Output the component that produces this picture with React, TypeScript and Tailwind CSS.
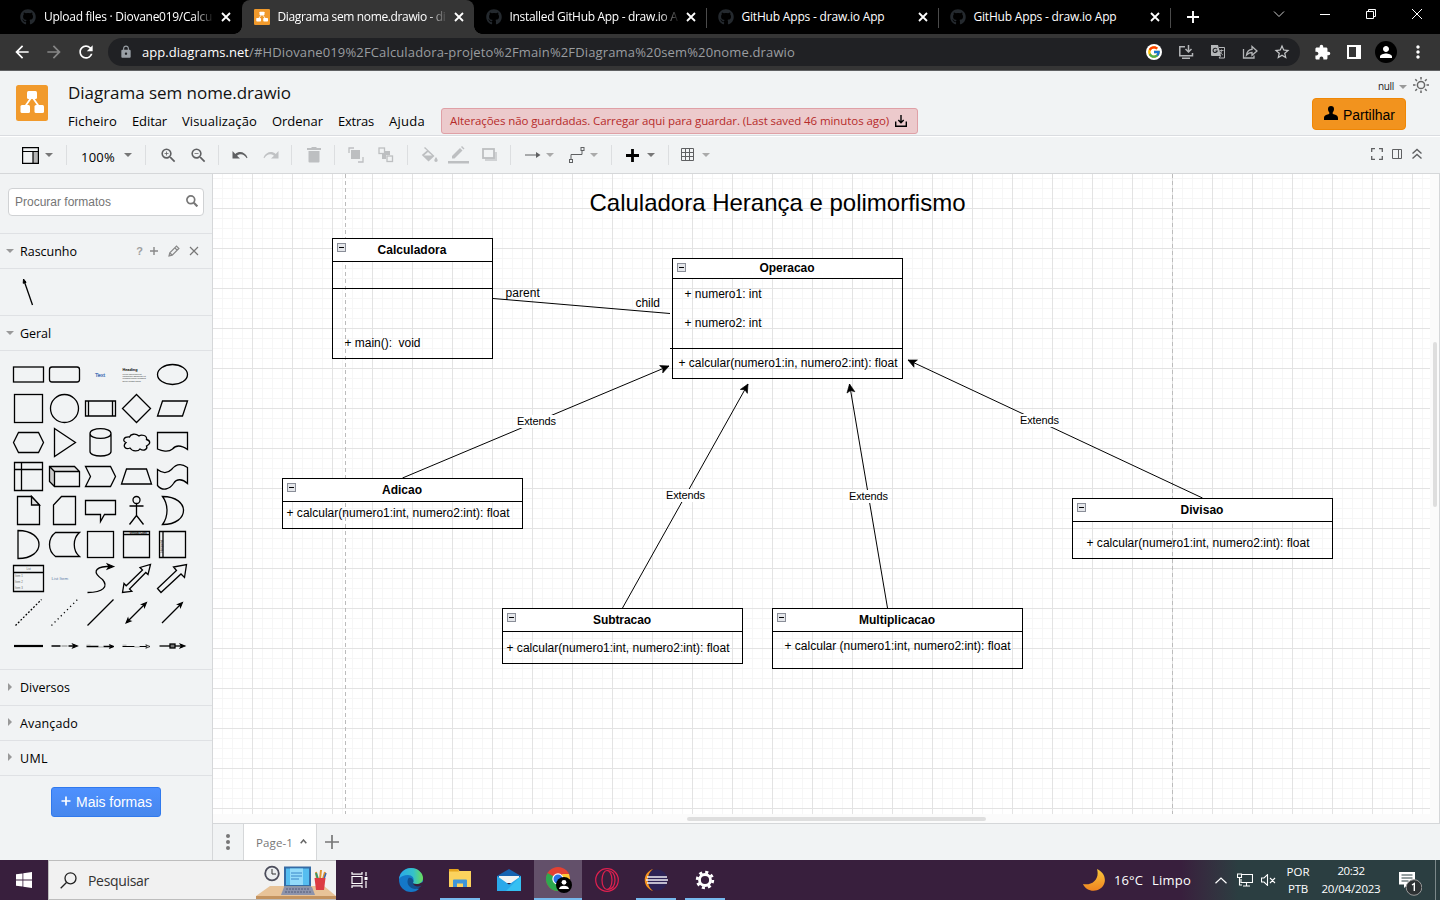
import { useLayoutEffect, useRef } from "react";
import type { ReactNode } from "react";
import { FaGithub } from "react-icons/fa";
import { FcGoogle } from "react-icons/fc";
import {
  MdLock, MdExtension, MdPerson, MdStarBorder, MdArrowBack, MdArrowForward, MdRefresh,
  MdMoreVert, MdZoomIn, MdZoomOut,
} from "react-icons/md";

/* Text run whose letter spacing is adjusted so that it takes exactly w pixels. */
function Fit({ w, className = "", children }: { w: number; className?: string; children: string }) {
  const ref = useRef<HTMLSpanElement>(null);
  useLayoutEffect(() => {
    const el = ref.current;
    if (!el) return;
    el.style.letterSpacing = "0px";
    const natural = el.getBoundingClientRect().width;
    el.style.letterSpacing = `${(w - natural) / children.length}px`;
  }, [w, children]);
  return <span ref={ref} className={`inline-block shrink-0 whitespace-pre ${className}`}>{children}</span>;
}

function Caret({ className = "" }: { className?: string }) {
  return <svg viewBox="0 0 8 4" className={`h-1 w-2 shrink-0 fill-current ${className}`}><path d="M0 0h8L4 4z" /></svg>;
}

function Logo({ className = "" }: { className?: string }) {
  return (
    <svg viewBox="0 0 32 36" preserveAspectRatio="none" className={className}>
      <rect width="32" height="36" rx="2.500" fill="#f19a2c" />
      <path d="M15 13L8 23M17 13l7 10" stroke="#fff" strokeWidth="1.800" />
      <rect x="11" y="6" width="10" height="8" rx="1.500" fill="#fff" />
      <rect x="4.500" y="20" width="9.500" height="8" rx="1.500" fill="#fff" />
      <rect x="18.500" y="20" width="9.500" height="8" rx="1.500" fill="#fff" />
    </svg>
  );
}

const tabs = [
  { t: "Upload files · Diovane019/Calcu", w: 168, active: false, line: false, fade: true },
  { t: "Diagrama sem nome.drawio - di", w: 168, active: true, line: false, fade: true },
  { t: "Installed GitHub App - draw.io A", w: 168, active: false, line: true, fade: true },
  { t: "GitHub Apps - draw.io App", w: 143, active: false, line: true, fade: false },
  { t: "GitHub Apps - draw.io App", w: 143, active: false, line: true, fade: false },
];

function TabStrip() {
  return (
    <div className="flex h-[34px] bg-black pl-2 text-white">
      {tabs.map((tab, i) => (
        <div key={i} className={`relative flex h-[34px] shrink-0 items-center ${i === 0 ? "w-[234px] pl-3 pr-[10px]" : "w-[232px] pl-[11.500px] pr-[9px]"} ${tab.active ? "rounded-t-lg bg-[#353535]" : ""}`}>
          {tab.active && <div className="absolute -left-2 bottom-0 size-2 bg-[radial-gradient(circle_at_0_0,transparent_7.500px,#353535_8px)]" />}
          {tab.active && <div className="absolute -right-2 bottom-0 size-2 bg-[radial-gradient(circle_at_100%_0,transparent_7.500px,#353535_8px)]" />}
          {tab.active ? <Logo className="size-4 shrink-0" /> : <FaGithub className="size-4 shrink-0 text-[#24292e]" />}
          <div className={`ml-2 mr-auto h-[18px] w-[170px] text-[12px] leading-[18px] ${tab.fade ? "[mask-image:linear-gradient(to_right,black_88%,transparent)]" : ""}`}>
            <Fit w={tab.w}>{tab.t}</Fit>
          </div>
          <svg viewBox="0 0 12 12" className="size-3 shrink-0"><path d="M2 2l8 8M10 2l-8 8" stroke="#fff" strokeWidth="1.800" /></svg>
          {tab.line && <div className="absolute -right-px top-2 h-5 w-px bg-[#4b4b4b]" />}
        </div>
      ))}
      <svg viewBox="0 0 14 14" className="ml-4 mt-[10px] size-3.5"><path d="M7 1v12M1 7h12" stroke="#fff" strokeWidth="1.900" /></svg>
      <div className="ml-auto flex h-7">
        <div className="flex w-[46px] items-center justify-center"><svg viewBox="0 0 12 12" className="size-3" fill="none" stroke="#ccc"><path d="M1 3.500l5 5 5-5" /></svg></div>
        <div className="flex w-[46px] items-center justify-center"><svg viewBox="0 0 10 10" className="size-2.5"><path d="M0 5.500h10" stroke="#fff" /></svg></div>
        <div className="flex w-[46px] items-center justify-center"><svg viewBox="0 0 10 10" className="size-2.5" fill="none" stroke="#fff"><path d="M.5 2.500h7v7h-7zM2.500 2.500v-2h7v7h-2" /></svg></div>
        <div className="flex w-[46px] items-center justify-center"><svg viewBox="0 0 10 10" className="size-2.5" stroke="#fff"><path d="M0 0l10 10M10 0L0 10" /></svg></div>
      </div>
    </div>
  );
}

function Slot({ children }: { children: ReactNode }) {
  return <div className="flex h-8 w-8 shrink-0 items-center justify-center">{children}</div>;
}

function AddressBar() {
  return (
    <div className="flex h-[37px] items-center border-b border-[#5f6062] bg-[#353535] pl-[6px] pr-[6px] text-white">
      <Slot><MdArrowBack className="size-5" /></Slot>
      <Slot><MdArrowForward className="size-5 text-[#868686]" /></Slot>
      <Slot><MdRefresh className="size-5" /></Slot>
      <div className="ml-[6px] mr-[6px] flex h-7 flex-1 items-center rounded-full bg-[#202124] pl-[11px] pr-[2px] text-[13px]">
        <MdLock className="size-3.5 text-[#9aa0a6]" />
        <div className="ml-[9px] flex-1 leading-5">
          <Fit w={107}>app.diagrams.net</Fit>
          <Fit w={546} className="text-[#9a9da0]">/#HDiovane019%2FCalculadora-projeto%2Fmain%2FDiagrama%20sem%20nome.drawio</Fit>
        </div>
        <Slot><span className="flex size-4 items-center justify-center rounded-full bg-white"><FcGoogle className="size-3.5" /></span></Slot>
        <Slot>
          <svg viewBox="0 0 16 16" className="size-4" fill="none" stroke="#b4b6b8" strokeWidth="1.500">
            <path d="M7 2.800H1.800v9h12.700V9M4 14.200h8" /><path d="M10.500 1v6.500M7.500 5l3 3 3-3" />
          </svg>
        </Slot>
        <Slot>
          <svg viewBox="0 0 16 16" className="size-4">
            <path d="M1 1h7l3 11H2a1 1 0 0 1-1-1z" fill="#b4b6b8" /><path d="M9 3.500h5.500v10.500H9l1.500-2" fill="none" stroke="#b4b6b8" />
            <path d="M7 5.300A2.100 2.100 0 1 0 7.200 7H5.500" fill="none" stroke="#202124" strokeWidth="1.100" /><path d="M9.500 6.500h4M11.500 5.500v1c0 2-1 3-2 4M10 7.500c1 2 2 3 3 3.500" fill="none" stroke="#b4b6b8" strokeWidth=".9" />
          </svg>
        </Slot>
        <Slot>
          <svg viewBox="0 0 16 16" className="size-4" fill="none" stroke="#b4b6b8" strokeWidth="1.300">
            <path d="M1.500 5v9h10.500v-2.500" /><path d="M4.500 11c.5-4 2.500-5.500 5.500-5.700V2.500L15 7l-5 4.300V8.500c-2.500 0-4 .8-5.500 2.500z" />
          </svg>
        </Slot>
        <Slot><MdStarBorder className="size-[18px] text-[#c6c8ca]" /></Slot>
      </div>
      <Slot><MdExtension className="size-[17px]" /></Slot>
      <Slot><svg viewBox="0 0 14 14" className="size-3.5"><path fillRule="evenodd" d="M0 0h14v14H0zM2 2v10h7V2z" fill="#fff" /></svg></Slot>
      <Slot><span className="flex size-[22px] items-center justify-center rounded-full bg-black"><MdPerson className="size-[18px]" /></span></Slot>
      <Slot><MdMoreVert className="size-5" /></Slot>
    </div>
  );
}

const menus = [
  { t: "Ficheiro", w: 49 }, { t: "Editar", w: 35 }, { t: "Visualização", w: 75 },
  { t: "Ordenar", w: 51 }, { t: "Extras", w: 36 }, { t: "Ajuda", w: 36 },
];

function Header() {
  return (
    <div className="flex h-[65px] border-b border-[#dadce0] bg-[#f1f3f4]">
      <Logo className="ml-4 mt-[14px] h-9 w-8 shrink-0" />
      <div className="ml-5 flex flex-col">
        <div className="mt-[10px] h-6 text-[17px] leading-6 text-[#111]"><Fit w={223}>Diagrama sem nome.drawio</Fit></div>
        <div className="mt-[3px] flex h-[26px] items-center text-[13px] leading-5 text-black">
          <div className="flex gap-[15px]">{menus.map((m) => <Fit key={m.t} w={m.w}>{m.t}</Fit>)}</div>
          <div className="ml-[16px] flex h-[26px] w-[477px] shrink-0 items-center rounded-[3px] border border-[#dfa0a6] bg-[#eccacc] pl-2 text-[11.500px] text-[#b62a2a]">
            <Fit w={439}>Alterações não guardadas. Carregar aqui para guardar. (Last saved 46 minutos ago)</Fit>
            <svg viewBox="0 0 12 12" className="ml-[6px] size-3" fill="none" stroke="#000" strokeWidth="1.400"><path d="M.7 6.500v4.800h10.600V6.500" /><path d="M6 0v7M3.300 5L6 7.700 8.700 5" /></svg>
          </div>
        </div>
      </div>
      <div className="ml-auto flex w-[128px] flex-col">
        <div className="ml-[66px] mt-[5px] flex h-[21px] items-center text-[10px] text-[#222]">
          <Fit w={16}>null</Fit>
          <Caret className="ml-[5px] mt-px text-[#999]" />
          <svg viewBox="0 0 18 18" className="-mt-[3px] ml-[5px] size-[18px]" fill="none" stroke="#666" strokeWidth="1.500">
            <circle cx="9" cy="9" r="3.600" /><path d="M9 1v2.500M9 14.500V17M1 9h2.500M14.500 9H17M3.300 3.300L5 5M13 13l1.700 1.700M3.300 14.700L5 13M13 5l1.700-1.700" />
          </svg>
        </div>
        <div className="mt-px flex h-8 w-[94px] items-center rounded border border-[#f08705] bg-[#f2931e] pl-[11px] pt-0.5 font-['Liberation_Sans',sans-serif] text-[14px] text-black">
          <svg viewBox="0 0 14 14" className="-mt-1 size-3.5"><path d="M7 0c2 0 3 1.300 3 3 0 1.500-.6 2.600-1.300 3.500v1.300C11 9 14 9 14 12v2H0v-2c0-3 3-3 5.300-4.200V6.500C4.600 5.600 4 4.500 4 3c0-1.700 1-3 3-3z" /></svg>
          <Fit w={52} className="ml-[5px]">Partilhar</Fit>
        </div>
      </div>
    </div>
  );
}

function Sep({ className }: { className: string }) {
  return <div className={`h-5 w-px shrink-0 bg-[#dcdee0] ${className}`} />;
}

function Toolbar() {
  return (
    <div className="flex h-[38px] items-center border-b border-[#d5d7d9] border-t border-t-white bg-[#f1f3f4] pl-[22px] text-[#5f6062]">
      <svg viewBox="0 0 17 17" className="size-[17px] shrink-0"><path d="M11 5h5v11h-5z" fill="#b5b5b5" /><path d="M.6.600h15.800v15.800H.6zM.6 4.500h15.800M11 4.500v12" fill="none" stroke="#000" strokeWidth="1.200" /></svg>
      <Caret className="ml-1.5 text-[#777]" />
      <Sep className="ml-[13px]" />
      <div className="ml-[14px] mt-[3px] text-[13px] leading-5 text-black"><Fit w={34}>100%</Fit></div>
      <Caret className="ml-[9px] text-[#777]" />
      <Sep className="ml-[13px]" />
      <MdZoomIn className="ml-[13px] size-[19px] shrink-0" />
      <MdZoomOut className="ml-[11px] size-[19px] shrink-0" />
      <Sep className="ml-[10px]" />
      <svg viewBox="0 0 16 10" className="ml-[13px] h-[10px] w-4 shrink-0"><path d="M.5 1v7.500H8L5 5.700C8.500 3 12 4 14.700 8.300l.8-.8C13 2 7.500.500 3.300 4z" fill="#5f6062" /></svg>
      <svg viewBox="0 0 16 10" className="ml-[15px] h-[10px] w-4 shrink-0 -scale-x-100"><path d="M.5 1v7.500H8L5 5.700C8.500 3 12 4 14.700 8.300l.8-.8C13 2 7.500.500 3.300 4z" fill="#c0c2c4" /></svg>
      <Sep className="ml-[12px]" />
      <svg viewBox="0 0 14 16" className="ml-[15px] h-4 w-3.5 shrink-0" fill="#bdbfc1"><path d="M0 1h4l1-1h4l1 1h4v2H0zM1.500 4h11v10.500a1 1 0 0 1-1 1h-9a1 1 0 0 1-1-1z" /></svg>
      <Sep className="ml-[13px]" />
      <svg viewBox="0 0 16 16" className="ml-[13px] size-4 shrink-0" stroke="#bdbfc1" fill="none" strokeWidth="1.300"><rect x="3" y="3" width="9" height="9" fill="#bdbfc1" stroke="none" /><path d="M1 6V1h5M10 15h5v-5" /></svg>
      <svg viewBox="0 0 16 16" className="ml-[14px] size-4 shrink-0" stroke="#bdbfc1" fill="none" strokeWidth="1.300"><path d="M4 4h8v4h-4v4H4z" fill="#bdbfc1" stroke="none" /><rect x="1" y="1" width="5.500" height="5.500" fill="#f1f3f4" /><rect x="9" y="9" width="5.500" height="5.500" fill="#f1f3f4" /></svg>
      <Sep className="ml-[13px]" />
      <svg viewBox="0 0 17 17" className="ml-[13px] size-[17px] shrink-0" fill="#bdbfc1"><path d="M4 0l9.500 9-6 5.500L.8 8 6 3.500 3 1z" /><path d="M7 5L3 8.500h8z" fill="#f1f3f4" /><path d="M15 10c1 1.600 1.700 2.500 1.700 3.300a1.600 1.600 0 0 1-3.400 0c0-.8.700-1.700 1.700-3.300z" /></svg>
      <svg viewBox="0 0 22 18" className="ml-[10px] h-[18px] w-[22px] shrink-0" fill="#bdbfc1"><path d="M0 15h21v2.500H0zM4 12.500V10l8-8 2.500 2.500-8 8zM13 1l1-1 2.500 2.500-1 1z" /></svg>
      <svg viewBox="0 0 16 14" className="ml-3 h-3.5 w-4 shrink-0"><path d="M3 4h12v9H3z" fill="#d0d2d4" /><rect x="1" y="1" width="11" height="9" fill="#f1f3f4" stroke="#bdbfc1" strokeWidth="1.800" /></svg>
      <Sep className="ml-[12px]" />
      <svg viewBox="0 0 16 6" className="ml-[14px] h-1.5 w-4 shrink-0"><path d="M0 3h12" stroke="#5f6062" /><path d="M11 0l4.500 3L11 6z" fill="#5f6062" /></svg>
      <Caret className="ml-[5px] text-[#aaa]" />
      <svg viewBox="0 0 16 16" className="ml-[15px] size-4 shrink-0" fill="none" stroke="#5f6062"><path d="M2 13V7.500h11V3" /><rect x=".5" y="12.500" width="3" height="3" /><rect x="12" y=".5" width="3" height="3" /></svg>
      <Caret className="ml-[5px] text-[#aaa]" />
      <Sep className="ml-[13px]" />
      <svg viewBox="0 0 13 13" className="ml-[14px] size-[13px] shrink-0"><path d="M6.500 0v13M0 6.500h13" stroke="#000" strokeWidth="2.800" /></svg>
      <Caret className="ml-2 text-[#777]" />
      <Sep className="ml-[13px]" />
      <svg viewBox="0 0 14 14" className="ml-[12px] size-3.5 shrink-0" fill="none" stroke="#5f6062"><path d="M.5.5h12v12H.5zM4.500.5v12M8.500.5v12M.5 4.500h12M.5 8.500h12" /></svg>
      <Caret className="ml-[7px] text-[#aaa]" />
      <div className="ml-auto mr-[17px] flex items-center gap-[9px]">
        <svg viewBox="0 0 12 12" className="-mt-0.5 size-3" fill="none" stroke="#5f6062" strokeWidth="1.300"><path d="M.7 4V.7H4M8 .7h3.300V4M11.300 8v3.300H8M4 11.300H.7V8" /></svg>
        <svg viewBox="0 0 10 10" className="-mt-0.5 h-2.5 w-2.5" fill="none" stroke="#5f6062"><path d="M.5.5h9v9h-9zM6.500.5v9" /></svg>
        <svg viewBox="0 0 12 12" className="-mt-0.5 size-3" fill="none" stroke="#5f6062" strokeWidth="1.400"><path d="M1.500 5.500L6 1.500l4.500 4M1.500 10.500L6 6.500l4.500 4" /></svg>
      </div>
    </div>
  );
}

const arrowHead = "M0 0l-6-2.500 1.500 2.500L-6 2.500z";

const shapes: ReactNode[] = [
  <rect x="-15" y="-7.500" width="30" height="15" />,
  <rect x="-15" y="-7.500" width="30" height="15" rx="2.500" />,
  <text x="-5.500" y="2" fontSize="5.500" fill="#3060b0" stroke="#3060b0" strokeWidth=".15">Text</text>,
  <g stroke="none"><text x="-14" y="-4" fontSize="3.800" fontWeight="700" fill="#000">Heading</text><g fill="#333" fontSize="2"><text x="-14" y="0.500">Lorem ipsum dolor sit</text><text x="-14" y="2.700">consectetur adipisicing elit</text><text x="-14" y="4.900">eiusmod tempor incididunt</text><text x="-14" y="7">dolore magna aliqua.</text></g></g>,
  <ellipse rx="15" ry="10" />,
  <rect x="-14" y="-14" width="28" height="28" />,
  <circle r="14" />,
  <path d="M-15-7.500h30v15h-30zM-12-7.500v15M12-7.500v15" />,
  <path d="M0-14L14 0 0 14-14 0z" />,
  <path d="M-10-7.500h25l-5 15h-25z" />,
  <path d="M-15 0l5-10h20l5 10-5 10h-20z" />,
  <path d="M-10-14L11 0-10 14z" />,
  <path d="M-10.500-9v18c0 6 21 6 21 0V-9c0-6.500-21-6.500-21 0s21 6.500 21 0" />,
  <path d="M-7-5.500c-6-.5-7.500 4-3.500 5.500-4 4 0 7.500 4 5.500C-4 9.500 2 9 3.500 6.500c4 2.500 8 0 6.500-3 4.500-2 4-5.500 0-6.500C11-7 5-8.500 2.500-6.500-1-9.500-6-8.500-7-5.500z" />,
  <path d="M-15-10h30V7C7 1.500 3 3 0 6.500-4 10-11 8.500-15 6.500z" />,
  <path d="M-14-14h28v28h-28zM-14-7h28M-7-14v28" />,
  <g><path d="M-15-10h25l5 5H-10z" fill="#e2e2e2" stroke="none" /><path d="M-15-10l5 5v15l-5-5z" fill="#ccc" stroke="none" /><path d="M-15-10h25l5 5v15h-25l-5-5zM-10-5h25M-10-5v15M-15-10l5 5" /></g>,
  <path d="M-15-10h25l5 10-5 10h-25l5-10z" />,
  <path d="M-10-7.500h20l5 15h-30z" />,
  <path d="M-15-7C-10-3-5-3-1-7c4-5 9-7 16-2V7C10 2 4 2 1 7c-4 6-11 8-16 2z" />,
  <g><path d="M-11-14H3l8 8.500V14h-22z" /><path d="M3-14v8.500h8z" fill="#ddd" /></g>,
  <path d="M-3-14h14v28h-22V-5.500z" />,
  <path d="M-15-10h30V4H4l-4 7v-7h-15z" />,
  <g><circle cy="-10.500" r="3.500" /><path d="M0-7V5M-7-4.500H7M0 5l-7 9M0 5l7 9" /></g>,
  <path d="M-10-14c28 0 28 28 0 28 6-8 6-20 0-28z" />,
  <path d="M-10.500-14c28 0 28 28 0 28z" />,
  <path d="M-9-12h24c-7 6-7 18 0 24H-9c-8-6-8-18 0-24z" />,
  <rect x="-13" y="-13" width="26" height="26" />,
  <g><path d="M-13-13h26v26h-26zM-13-10h26" /><text x="-7" y="-10.500" fontSize="2.800" fontWeight="700" fill="#000" stroke="none">Vertical Cont</text></g>,
  <g><path d="M-13-13h26v26h-26zM-9.500-13v26" /><text transform="translate(-10 8) rotate(-90)" fontSize="2.800" fill="#000" stroke="none">Horizontal</text></g>,
  <g><path d="M-15-13h30v26h-30zM-15-6h30" /><g fill="#666" stroke="none" fontSize="2.800"><text x="-2" y="-9">List</text><text x="-13.500" y="-2">Item 1</text><text x="-13.500" y="4">Item 2</text><text x="-13.500" y="10">Item 3</text></g></g>,
  <text x="-13" y="1" fontSize="4.400" fill="#5f7fa8" stroke="none">List Item</text>,
  <g><path d="M-13 14C3 14 8 8 2 1-8-6-6-11 6-12h3" /><path d={arrowHead} transform="translate(13 -12)" fill="#000" /></g>,
  <path d="M-14 14l1.500-9 2.200 2.300L6-8.500 3.500-11 14-14l-2.500 10L9.300-6-7 10.500l2.300 2.300z" />,
  <path d="M-15 10L4-8 1-11.500 14-14l-2 13-3.500-3.500L-11.500 14z" />,
  <path d="M-13 13L13-13" strokeDasharray="1.800 1.800" />,
  <path d="M-13 13L13-13" strokeDasharray="1.200 3.200" />,
  <path d="M-13 13L13-13" />,
  <g><path d="M-8 8L8-8" /><path d={arrowHead} transform="translate(10 -10) rotate(-45) scale(.8)" fill="#000" /><path d={arrowHead} transform="translate(-10.500 10.500) rotate(135) scale(.8)" fill="#000" /></g>,
  <g><path d="M-10.500 10.500L8-8" /><path d={arrowHead} transform="translate(10 -10) rotate(-45) scale(.8)" fill="#000" /></g>,
  <path d="M-14.500 -.5h29" strokeWidth="2.200" />,
  <g><path d="M-13 -.5h9M4 -.5h5" /><path d="M-3 -.5h6" stroke="#999" /><path d={arrowHead} transform="translate(13 -.5) scale(.8)" fill="#000" /></g>,
  <g><path d="M-14 0h12M3 0h7" /><path d="M-2 .5h5M-14-1.300h4" stroke="#999" strokeWidth=".8" /><path d={arrowHead} transform="translate(13.500 0) scale(.75)" fill="#000" /></g>,
  <g strokeWidth="1"><path d="M-14 0h12M3 0h7" /><path d="M-2 .5h5M-14-1.300h4" stroke="#999" strokeWidth=".8" /><path d={arrowHead} transform="translate(13.500 0) scale(.7)" /></g>,
  <g><path d="M-13-.5h23" /><rect x="-2.500" y="-2.500" width="5" height="4" fill="#777" /><path d={arrowHead} transform="translate(12.500 -.5) scale(.8)" fill="#000" /></g>,
];

function Closed({ t, w, className }: { t: string; w: number; className: string }) {
  return (
    <div className={`flex items-center border-b border-[#dfe1e4] pl-2 text-[12.500px] ${className}`}>
      <svg viewBox="0 0 4 8" className="-mt-0.5 h-2 w-1 shrink-0"><path d="M0 0l4 4-4 4z" fill="#999" /></svg>
      <Fit w={w} className="ml-2 mt-0.5 font-medium">{t}</Fit>
    </div>
  );
}

function Sidebar() {
  return (
    <div className="flex w-[213px] shrink-0 flex-col border-r border-[#d5d7d9] bg-[#f1f3f4] text-black">
      <div className="h-[60px] border-b border-[#dfe1e4] px-2 pt-[14px]">
        <div className="flex h-7 w-[196px] items-center justify-between rounded border border-[#d0d2d4] bg-white pl-1.5 pr-[5px] font-['Liberation_Sans',sans-serif] text-[12px] text-[#757575]">
          <Fit w={96}>Procurar formatos</Fit>
          <svg viewBox="0 0 12 12" className="-mt-0.5 size-3" fill="none" stroke="#777"><circle cx="4.800" cy="4.800" r="3.900" strokeWidth="1.700" /><path d="M7.800 7.800l3.600 3.600" strokeWidth="2.200" /></svg>
        </div>
      </div>
      <div className="flex h-[35px] items-center border-b border-[#dfe1e4] pl-1.5 text-[12.500px]">
        <Caret className="text-[#999]" />
        <Fit w={57} className="ml-1.5 mt-0.5 font-medium">Rascunho</Fit>
        <div className="ml-auto mr-[9px] flex items-center">
          <span className="font-['Liberation_Sans',sans-serif] text-[11px] font-bold text-[#a0a0a0]">?</span>
          <svg viewBox="0 0 10 10" className="ml-1.5 size-2.5"><path d="M5 1v8M1 5h8" stroke="#888" strokeWidth="1.400" /></svg>
          <svg viewBox="0 0 12 12" className="ml-[9px] size-3" fill="none" stroke="#888" strokeWidth="1.200"><path d="M1 11l.8-3.200L8.500 1.100l2.400 2.400L4.200 10.200zM7 3l2.300 2.300M2 8l2 2" /></svg>
          <svg viewBox="0 0 10 10" className="ml-[9px] mr-1 size-2.5"><path d="M1 1l8 8M9 1L1 9" stroke="#777" strokeWidth="1.200" /></svg>
        </div>
      </div>
      <div className="h-[47px] border-b border-[#dfe1e4] pl-[18px] pt-2">
        <svg viewBox="0 0 20 30" className="h-[30px] w-5"><path d="M14.500 28L6.500 5" stroke="#000" strokeWidth="1.300" /><path d="M5.500 2l-.3 4.300 2.900-1z" stroke="#000" /></svg>
      </div>
      <div className="flex h-[35px] items-center border-b border-[#dfe1e4] pl-1.5 text-[12.500px]">
        <Caret className="text-[#999]" />
        <Fit w={31} className="ml-1.5 mt-0.5 font-medium">Geral</Fit>
      </div>
      <div className="grid h-[319px] grid-cols-[repeat(5,36px)] content-start border-b border-[#dfe1e4] pl-[10px] pt-1.5 font-['Liberation_Sans',sans-serif]">
        {shapes.map((s, i) => (
          <svg key={i} viewBox="-18.500 -17.500 36 34" className="h-[34px] w-9" fill="none" stroke="#000" strokeWidth="1.300">{s}</svg>
        ))}
      </div>
      <Closed t="Diversos" w={50} className="h-9" />
      <Closed t="Avançado" w={58} className="h-[35px]" />
      <Closed t="UML" w={28} className="h-[35px]" />
      <div className="ml-[51px] mt-[11px] flex h-[30px] w-[110px] items-center rounded-[3px] border border-[#3079ed] bg-linear-to-b from-[#4d90fe] to-[#4787ed] pl-[9px] font-['Liberation_Sans',sans-serif] text-[14px] text-white">
        <svg viewBox="0 0 10 10" className="-mt-0.5 size-2.5"><path d="M5 .5v9M.5 5h9" stroke="#fff" strokeWidth="1.700" /></svg>
        <Fit w={76} className="ml-[5px]">Mais formas</Fit>
      </div>
    </div>
  );
}

type ClassNode = { name: string; x: number; y: number; w: number; h: number; head: number; tw: number };
const nodes: ClassNode[] = [
  { name: "Calculadora", x: 332, y: 238, w: 161, h: 121, head: 24, tw: 69 },
  { name: "Operacao", x: 672, y: 258, w: 231, h: 121, head: 21, tw: 55 },
  { name: "Adicao", x: 282, y: 478, w: 241, h: 51, head: 24, tw: 40 },
  { name: "Subtracao", x: 502, y: 608, w: 241, h: 56, head: 24, tw: 58 },
  { name: "Multiplicacao", x: 772, y: 608, w: 251, h: 61, head: 24, tw: 76 },
  { name: "Divisao", x: 1072, y: 498, w: 261, h: 61, head: 24, tw: 43 },
];

/* x = left edge, y = vertical centre */
const labels = [
  { t: "+ main():  void", x: 344.5, y: 343, w: 76 },
  { t: "parent", x: 505.5, y: 293, w: 34.5 },
  { t: "child", x: 635.5, y: 303, w: 24.5 },
  { t: "+ numero1: int", x: 684.5, y: 294, w: 77 },
  { t: "+ numero2: int", x: 684.5, y: 323, w: 77 },
  { t: "+ calcular(numero1:in, numero2:int): float", x: 678.5, y: 363, w: 219 },
  { t: "+ calcular(numero1:int, numero2:int): float", x: 286.5, y: 513, w: 223 },
  { t: "+ calcular(numero1:int, numero2:int): float", x: 506.5, y: 648, w: 223 },
  { t: "+ calcular (numero1:int, numero2:int): float", x: 784.5, y: 646, w: 226 },
  { t: "+ calcular(numero1:int, numero2:int): float", x: 1086.5, y: 543, w: 223 },
];

const edges = [
  { x1: 402.5, y1: 478, x2: 669, y2: 366, lx: 536.5, ly: 422 },
  { x1: 622.5, y1: 608, x2: 748, y2: 384, lx: 685.5, ly: 496 },
  { x1: 887.5, y1: 608, x2: 849.5, y2: 384, lx: 868.5, ly: 497 },
  { x1: 1202.5, y1: 498, x2: 908, y2: 360, lx: 1039.5, ly: 421 },
];

const OX = 213;
const OY = 174;

function Canvas() {
  return (
    <div className="relative h-[649px] overflow-hidden border-r border-[#d5d7d9] bg-[#fbfbfb] font-['Liberation_Sans',sans-serif] text-[12px] leading-[14px] text-black">
      <svg viewBox="213 174 1226 649" className="absolute left-0 top-0 h-[649px] w-[1226px]">
        <defs>
          <pattern id="grid" x="252" y="208" width="40" height="40" patternUnits="userSpaceOnUse">
            <path d="M10.500 0v40M20.500 0v40M30.500 0v40M0 10.500h40M0 20.500h40M0 30.500h40" stroke="#f6f6f6" />
            <path d="M.5 0v40M0 .5h40" stroke="#e3e3e3" />
          </pattern>
        </defs>
        <rect x="213" y="174" width="1217" height="640" fill="#fff" />
        <rect x="213" y="174" width="1217" height="640" fill="url(#grid)" />
        <path d="M345.500 174v640M1172.500 174v640" stroke="#bcbcbc" strokeDasharray="4 3" />
        <path d="M493 298.500L670 313.500M670 348.500h3" stroke="#000" fill="none" />
        {edges.map((e) => (
          <g key={e.lx}>
            <path d={`M${e.x1} ${e.y1}L${e.x2} ${e.y2}`} stroke="#000" />
            <path d="M0 0l-8.500-4 2 4-2 4z" stroke="#000" strokeWidth=".6" transform={`translate(${e.x2} ${e.y2}) rotate(${(Math.atan2(e.y2 - e.y1, e.x2 - e.x1) * 180) / Math.PI})`} />
          </g>
        ))}
      </svg>
      <div className="absolute left-[376.500px] top-[14px] text-[24px] leading-[29px]"><Fit w={376}>Caluladora Herança e polimorfismo</Fit></div>
      {nodes.map((n) => (
        <div key={n.name} className="absolute flex flex-col border border-black" style={{ left: n.x - OX, top: n.y - OY, width: n.w, height: n.h }}>
          <div className={`relative flex shrink-0 items-center justify-center border-b border-black bg-white pr-px font-bold ${n.name === "Operacao" ? "pb-0.5" : ""}`} style={{ height: n.head - 1 }}>
            <Fit w={n.tw}>{n.name}</Fit>
            <svg viewBox="0 0 9 9" className="absolute left-1 top-1 size-[9px]"><rect x=".5" y=".5" width="8" height="8" fill="#e4e6ea" stroke="#8a8e98" /><path d="M2 4.500h5" stroke="#000" /></svg>
          </div>
          {n.name === "Calculadora" && <div className="h-[27px] border-b border-black" />}
          {n.name === "Operacao" && <div className="h-[70px] border-b border-black" />}
        </div>
      ))}
      {labels.map((l, i) => (
        <div key={i} className="absolute" style={{ left: l.x - OX, top: l.y - OY - 7 }}><Fit w={l.w}>{l.t}</Fit></div>
      ))}
      {edges.map((e) => (
        <div key={e.lx} className="absolute flex w-10 justify-center bg-white text-[11px] leading-[13px]" style={{ left: e.lx - OX - 20, top: e.ly - OY - 7 }}><Fit w={39}>Extends</Fit></div>
      ))}
      <div className="absolute left-[474px] top-[643px] h-1 w-[299px] rounded-full bg-[#dedede]" />
      <div className="absolute left-[1220px] top-[168px] h-[165px] w-1 rounded-full bg-[#dedede]" />
    </div>
  );
}

function PageTabs() {
  return (
    <div className="flex h-[37px] items-center border-t border-[#d5d7d9] bg-[#f1f3f4] text-[#777]">
      <svg viewBox="0 0 4 16" className="ml-[13px] h-4 w-1 fill-current"><circle cx="2" cy="2" r="2" /><circle cx="2" cy="8" r="2" /><circle cx="2" cy="14" r="2" /></svg>
      <div className="ml-[13px] flex h-9 w-[74px] items-center border-x border-[#d5d7d9] bg-white pl-3 text-[11.500px]">
        <Fit w={37} className="mt-0.5">Page-1</Fit>
        <svg viewBox="0 0 7 5" className="-mt-px ml-[7px] h-[5px] w-[7px]" fill="none" stroke="#666" strokeWidth="1.500"><path d="M.7 4.300L3.500 1l2.800 3.300" /></svg>
      </div>
      <svg viewBox="0 0 14 14" className="ml-2 size-3.5"><path d="M7 0v14M0 7h14" stroke="#777" strokeWidth="1.700" /></svg>
    </div>
  );
}

function TaskApp({ children, className = "", bar = "" }: { children: ReactNode; className?: string; bar?: string }) {
  return (
    <div className={`flex h-10 w-[49px] shrink-0 flex-col items-center ${className}`}>
      <div className="flex h-[38px] w-12 items-center justify-center pt-0.5">{children}</div>
      <div className={`h-0.5 ${bar}`} />
    </div>
  );
}

function Taskbar() {
  return (
    <div className="flex h-10 bg-linear-to-r from-[#381f3d] from-82% to-[#2b3e41] to-86% text-white">
      <div className="flex w-12 items-center justify-center"><svg viewBox="0 0 16 16" className="size-4" fill="#fff"><path d="M0 2.300l6.500-.9v6.200H0zM7.300 1.300L16 0v7.600H7.300zM0 8.400h6.500v6.200L0 13.700zM7.300 8.400H16V16l-8.700-1.300z" /></svg></div>
      <div className="flex h-10 w-72 items-center border border-r-0 border-[#bdbdbd] bg-[#f1f1f1] pl-[11px] text-[14px] text-[#333]">
        <svg viewBox="0 0 17 17" className="size-[17px]" fill="none" stroke="#222" strokeWidth="1.300"><circle cx="10.500" cy="6.300" r="5.500" /><path d="M6.500 10.500L.7 16.300" /></svg>
        <Fit w={61} className="ml-[11px]">Pesquisar</Fit>
        <svg viewBox="256 861 80 38" className="ml-auto h-[38px] w-20">
          <path d="M270 886h54l12 10H256z" fill="#e8c398" /><path d="M256 896h80v3h-80z" fill="#c4935f" />
          <circle cx="272" cy="873.500" r="6.800" fill="#eceef0" stroke="#4c4d5b" strokeWidth="1.800" /><path d="M272 869v5h4" fill="none" stroke="#333" />
          <path d="M284 866.500h27v20h-27z" fill="#356ba5" /><path d="M286 868.500h23v16.500h-23z" fill="#55bdf0" /><path d="M290 868.500h13v16.500h-13z" fill="#93dbfa" /><path d="M291 873h11M291 876h11M291 879h8" stroke="#3b86c8" />
          <path d="M284 887h28l3 8h-34z" fill="#8d93ab" /><path d="M286 889h24M285 892h26" stroke="#555c78" strokeDasharray="2 1" />
          <path d="M317 879l-1-7M320 879l1-9M323 879l2-7" stroke="#e0932f" strokeWidth="2" /><path d="M318 879l-2-6" stroke="#399568" strokeWidth="2" /><path d="M324 879l2-6" stroke="#3867b0" strokeWidth="1.500" />
          <path d="M314.500 878h11l-1.500 12h-8z" fill="#dc3b42" />
        </svg>
      </div>
      <div className="flex w-[50px] items-center justify-center pr-[3px]">
        <svg viewBox="0 0 17 16" className="h-4 w-[17px]" fill="none" stroke="#fff" strokeWidth="1.200"><path d="M1 4.500h10v7H1zM1 0v2.200h10V0M1 16v-2.200h10V16M15 0v4M15 9v7" /><path d="M13.500 5h3v3h-3z" fill="#fff" stroke="none" /></svg>
      </div>
      <TaskApp className="pl-px">
        <svg viewBox="0 0 24 24" className="size-6">
          <defs><linearGradient id="eg" x1="0" x2="1"><stop offset="0" stopColor="#29a8ea" /><stop offset=".6" stopColor="#35c1c9" /><stop offset="1" stopColor="#6bdc58" /></linearGradient></defs>
          <circle cx="12" cy="12" r="12" fill="#1478c8" />
          <path d="M15 12.500c0 3 4 3.500 8 2l2-1v6l-4 1.500c-3 0-8-3-8-7z" fill="#381f3d" />
          <path d="M0 11C1 4 6 0 12 0c7 0 12 5 12 10 0 4-3 6-6.500 6-3 0-4-1-3.500-2 2-4-1-7-5-7-4 0-7 1-9 4z" fill="url(#eg)" />
          <path d="M9.500 10c-3 5 1 10.500 6 11 3 .3 5-1 7-3.500-3 2-8.500 1-8.500-2.500 1.500-2-1-6.500-4.500-5z" fill="#12508f" />
        </svg>
      </TaskApp>
      <TaskApp className="pl-px" bar="w-10 bg-[#76b9ed]">
        <svg viewBox="0 0 22 18" className="-mt-1 h-[18px] w-[22px]"><path d="M0 0h9l1.500 2H22v16H0z" fill="#fbd25d" /><path d="M0 0h9l1 2.500H0z" fill="#e5a41d" /><path d="M4 18v-6.500a1 1 0 0 1 1-1h12a1 1 0 0 1 1 1V18h-4v-3.500H8V18z" fill="#3d95d8" /></svg>
      </TaskApp>
      <TaskApp className="pl-px">
        <svg viewBox="0 0 24 22" className="h-[22px] w-6"><path d="M0 7l12-7 12 7v3H0z" fill="#1662b0" /><path d="M2 7h20v7H2z" fill="#f2f2f2" /><path d="M0 7l12 8.500L24 7v15H0z" fill="#2aa8ea" /><path d="M24 7L9 22h15z" fill="#35c0f2" /></svg>
      </TaskApp>
      <TaskApp className="border-l border-[#381f3d] bg-[#63506a]" bar="w-12 bg-[#76b9ed]">
        <svg viewBox="0 0 26 26" className="ml-0.5 size-[26px]">
          <circle cx="12" cy="12" r="12" fill="#e34133" /><path d="M1.600 6A12 12 0 0 0 12 24l5.200-9z" fill="#2da94f" /><path d="M24 12A12 12 0 0 1 12 24l5.200-9L16 7h7z" fill="#fcc934" /><circle cx="12" cy="12" r="5.700" fill="#fff" /><circle cx="12" cy="12" r="4.500" fill="#2b73e8" />
          <circle cx="18" cy="18" r="8" fill="#000" /><circle cx="18" cy="15.300" r="2.400" fill="#fff" /><path d="M13 22c0-4.500 10-4.500 10 0z" fill="#fff" />
        </svg>
      </TaskApp>
      <TaskApp className="pl-px"><svg viewBox="0 0 24 24" className="size-6" fill="none" stroke="#e0204f" strokeWidth="1.200"><circle cx="12" cy="12" r="11.300" /><ellipse cx="12" cy="12" rx="5" ry="9.500" /><path d="M12 2.500c7 0 8 6 8 9.500s-1 9.500-8 9.500" /></svg></TaskApp>
      <TaskApp className="pl-px" bar="w-10 bg-[#76b9ed]">
        <svg viewBox="0 0 24 24" className="size-6"><circle cx="13" cy="12" r="10.500" fill="#2c2255" /><path d="M9 1C-2 5-2 19 9 23 2 18 2 6 9 1z" fill="#f7941e" /><path d="M3 9h20M2 12h22M3 15h20" stroke="#f0eef5" strokeWidth="1.500" /></svg>
      </TaskApp>
      <TaskApp className="pl-px" bar="w-10 bg-[#76b9ed]">
        <svg viewBox="-10 -10 20 20" className="size-5"><circle r="5.500" fill="none" stroke="#fff" strokeWidth="2.800" /><circle r="7.800" fill="none" stroke="#fff" strokeWidth="2.800" strokeDasharray="3.060 3.060" /></svg>
      </TaskApp>
      <div className="ml-auto flex items-center">
        <svg viewBox="0 0 22 22" className="size-[22px]"><defs><linearGradient id="moon" x1="0" x2="0" y1="0" y2="1"><stop offset="0" stopColor="#f8c63b" /><stop offset="1" stopColor="#ef8420" /></linearGradient></defs><path d="M14 0c11 5 10 18 0 21.300C8 23 2 20 0 15c9 2 17-5 14-15z" fill="url(#moon)" /></svg>
        <div className="ml-[9px] w-[98px] text-[13px] leading-5"><Fit w={29}>16°C</Fit><Fit w={39} className="ml-[9px]">Limpo</Fit></div>
        <svg viewBox="0 0 12 7" className="ml-[3px] h-[7px] w-3" fill="none" stroke="#fff" strokeWidth="1.200"><path d="M.5 6.300L6 1l5.500 5.300" /></svg>
        <svg viewBox="0 0 16 14" className="ml-[10px] h-3.5 w-4" fill="none" stroke="#fff" strokeWidth="1.100"><path d="M5 1.500h10.500v8H4V6M9.500 9.500v3M6 13h7M.5 1h4v3.500h-4zM2.500 4.500V12H5" /></svg>
        <svg viewBox="0 0 15 12" className="ml-2 h-3 w-[15px]" fill="none" stroke="#fff" strokeWidth="1.100"><path d="M.5 4v4H3l3.500 3.300V.7L3 4zM9 4l5 5M14 4L9 9" /></svg>
        <div className="ml-[9px] flex w-[26px] flex-col items-center text-[11.500px] leading-[17px]"><Fit w={23}>POR</Fit><Fit w={20}>PTB</Fit></div>
        <div className="ml-[10px] flex w-[60px] flex-col items-center text-[11.500px] leading-[18px]"><Fit w={27}>20:32</Fit><Fit w={59}>20/04/2023</Fit></div>
        <svg viewBox="0 0 24 26" className="ml-[17px] mt-2 h-[26px] w-6"><path d="M1 1h16v12.500h-7l-4 3.500v-3.500H1z" fill="#fff" /><path d="M3.500 4h11M3.500 7h11M3.500 10h7" stroke="#2b3e41" /><circle cx="16" cy="16.500" r="7.800" fill="#2d3133" stroke="#999" /><path d="M14 14l2.300-1.500V20" fill="none" stroke="#fff" strokeWidth="1.400" /></svg>
        <div className="ml-[13px] mr-1 h-10 w-px bg-[#7b888a]" />
      </div>
    </div>
  );
}

export default function Desktop() {
  return (
    <div className="flex h-[900px] w-[1440px] flex-col overflow-hidden bg-white font-['Open_Sans','Noto_Sans',sans-serif]">
      <TabStrip />
      <AddressBar />
      <Header />
      <Toolbar />
      <div className="flex h-[686px]">
        <Sidebar />
        <div className="flex min-w-0 flex-1 flex-col">
          <Canvas />
          <PageTabs />
        </div>
      </div>
      <Taskbar />
    </div>
  );
}
